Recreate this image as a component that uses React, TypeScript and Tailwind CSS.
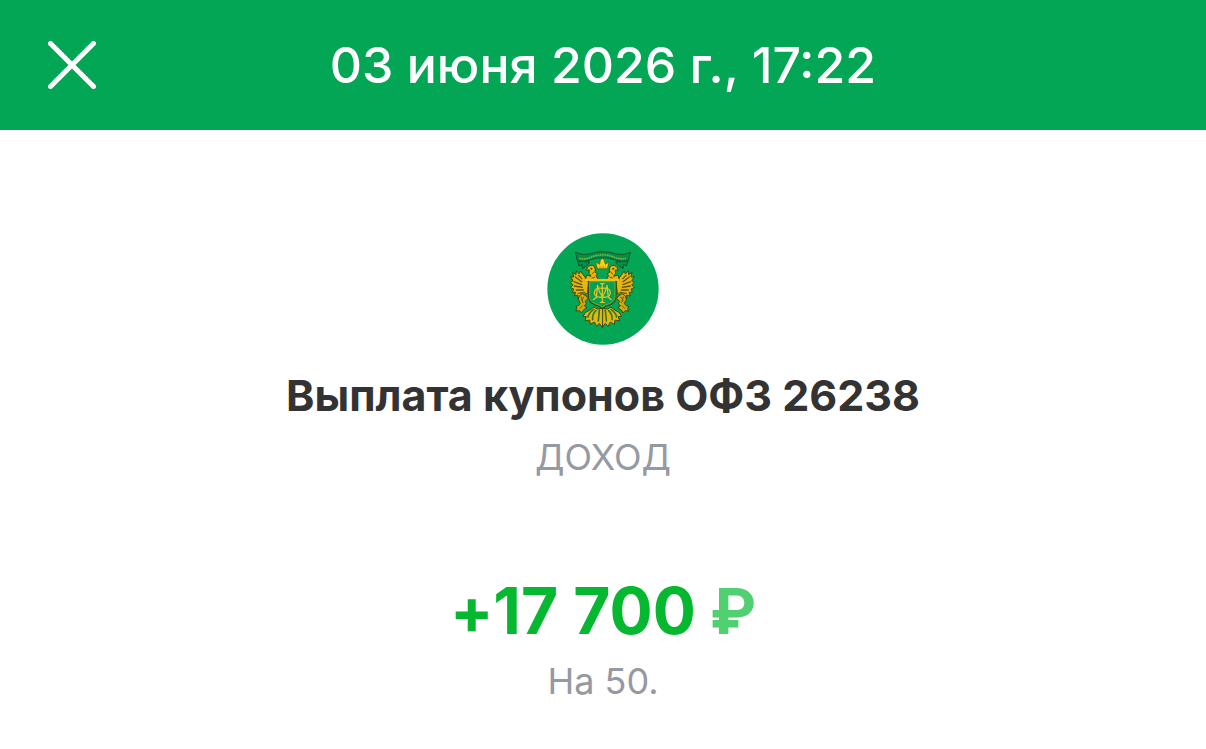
const operation = {
  date: '03 июня 2026 г., 17:22',
  title: 'Выплата купонов ОФЗ 26238',
  category: 'ДОХОД',
  amount: '+17\u00a0700',
  currency: '₽',
  note: 'На 50.',
}

function CloseIcon() {
  return (
    <svg
      className="size-12"
      viewBox="0 0 48 48"
      fill="none"
      stroke="currentColor"
      strokeWidth="5"
      strokeLinecap="round"
      aria-hidden="true"
    >
      <path d="M2.5 2.5 45.5 45.5M45.5 2.5 2.5 45.5" />
    </svg>
  )
}

// Right half of the eagle, reused mirrored for the left one
function EagleHalf() {
  return (
    <g strokeLinejoin="round" strokeLinecap="round">
      {/* Wing */}
      <path
        d="M230 172 L238 160 Q246 150 254 139 L257 148 L266 138 L267 150 L277 143 L274 157 L283 156 L276 168 L284 173 L276 180 L284 189 L274 193 L278 203 L268 203 L272 214 L261 211 L262 221 L251 215 L245 209 L234 207 Z"
        fill="#e6b50f"
        stroke="#3f4a12"
        strokeWidth="3"
      />
      <path
        d="M250 162 L259 152M250 171 L269 157M250 180 L273 171M248 188 L272 184M245 196 L266 196M241 203 L260 206"
        fill="none"
        stroke="#5d5208"
        strokeWidth="4"
      />
      {/* Head and neck */}
      <path
        d="M199 166 L207 153 L202 147 L210 143 Q206 128 217 122 Q231 120 236 137 L227 136 Q231 147 222 155 L235 151 L239 166 Z"
        fill="#e6b50f"
        stroke="#3f4a12"
        strokeWidth="3"
      />
      <circle cx="221" cy="132" r="3" fill="#3b4a12" />
      <path d="M213 142 L219 148M211 158 L219 160" stroke="#6b5b08" strokeWidth="3" />
      {/* Leg with talon */}
      <path
        d="M238 213 L247 207 L257 213 L260 225 L254 236 L259 243 L267 245 L264 252 L268 259 L256 258 L250 265 L245 256 L234 249 L242 244 L236 236 L240 230 L231 222 Z"
        fill="#d4a80f"
        stroke="#3f4a12"
        strokeWidth="3"
      />
      <path d="M244 217 L250 227M251 217 L246 234M247 243 L255 251" stroke="#6b5b08" strokeWidth="3" />
      {/* Tail feathers */}
      <path
        d="M188 251 L203 253 L214 247 L222 254 L239 264 L246 275 L236 276 L240 289 L226 286 L224 299 L212 292 L205 305 L197 296 L188 308 Z"
        fill="#e6b50f"
        stroke="#3f4a12"
        strokeWidth="3"
      />
      <path
        d="M197 256 L200 289M207 258 Q219 269 217 285M214 254 Q229 265 231 277"
        fill="none"
        stroke="#2c7a2c"
        strokeWidth="5"
      />
    </g>
  )
}

function MinistryEmblem() {
  return (
    <svg className="size-28" viewBox="22 25 336 336" role="img" aria-label="Минфин России">
      <circle cx="190" cy="193" r="167" fill="#03a654" />
      <EagleHalf />
      <g transform="matrix(-1 0 0 1 376 0)">
        <EagleHalf />
      </g>
      {/* Crown */}
      <path
        d="M173 132 L168 112 L180 119 L182 107 L188 101 L194 107 L197 119 L208 112 L203 132 Z"
        fill="#f9d018"
        stroke="#4d5a14"
        strokeWidth="2"
        strokeLinejoin="round"
      />
      <path d="M177 127H199" stroke="#d49a0c" strokeWidth="3" />
      {/* Shield with monogram */}
      <path
        d="M147 168H229V215Q229 234 211 240Q196 244 188 252Q180 244 165 240Q147 234 147 215Z"
        fill="#04a152"
        stroke="#3b4a12"
        strokeWidth="4"
      />
      <path
        d="M150 171H226V214Q226 231 209 237Q196 240 188 247Q180 240 167 237Q150 231 150 214Z"
        fill="none"
        stroke="#b8ac1c"
        strokeWidth="2"
      />
      <path d="M136 166H240" stroke="#f0c416" strokeWidth="6" />
      <g fill="none" stroke="#d8c42a" strokeWidth="4" strokeLinecap="round">
        <path d="M188 177V233M182 233H194M183 177H193" />
        <path d="M188 191C156 184 156 224 188 217C220 224 220 184 188 191Z" />
        <path d="M161 225L170 218L174 181Q177 202 188 215Q199 202 202 181L206 218L215 225" />
      </g>
      {/* Ribbon */}
      <g fill="#069046" stroke="#174d2a" strokeWidth="3" strokeLinejoin="round">
        <path d="M113 109 L118 124 L127 119 L128 132 L143 122 L150 112Z" />
        <path d="M265 109 L260 124 L251 119 L250 132 L235 122 L228 112Z" />
        <path d="M107 83Q126 93 149 88Q189 74 229 88Q252 93 272 83L266 108Q246 114 227 106Q189 92 151 106Q132 114 113 108Z" />
      </g>
      <path
        d="M119 101Q137 105 153 98Q189 83 225 98Q241 105 259 101"
        fill="none"
        stroke="#8dbb48"
        strokeWidth="4"
        strokeDasharray="5 2"
      />
    </svg>
  )
}

export default function App() {
  return (
    <div className="min-h-screen bg-white font-['Inter',sans-serif]">
      <header className="grid grid-cols-[48px_1fr_48px] items-center bg-[#03a654] px-12 py-8 text-white">
        <button type="button" aria-label="Закрыть" className="size-12">
          <CloseIcon />
        </button>
        <h1 className="text-center text-[50px] leading-[66px] font-medium">{operation.date}</h1>
      </header>

      <main className="flex flex-col items-center px-6 pt-[103px] pb-10 text-center">
        <MinistryEmblem />
        <h2 className="mt-6 text-[43px] leading-[52px] font-bold text-[#333333]">{operation.title}</h2>
        <p className="mt-3 text-[36px] leading-[48px] text-[#9599a2]">{operation.category}</p>

        <p className="mt-[90px] text-[64px] leading-[80px] font-bold text-[#06b82f] [font-feature-settings:'calt'_0]">
          {operation.amount}{' '}
          <span className="font-['Roboto',sans-serif] text-[#51d071]">{operation.currency}</span>
        </p>
        <p className="mt-1 text-[36px] leading-[48px] text-[#9599a2]">{operation.note}</p>
      </main>
    </div>
  )
}
